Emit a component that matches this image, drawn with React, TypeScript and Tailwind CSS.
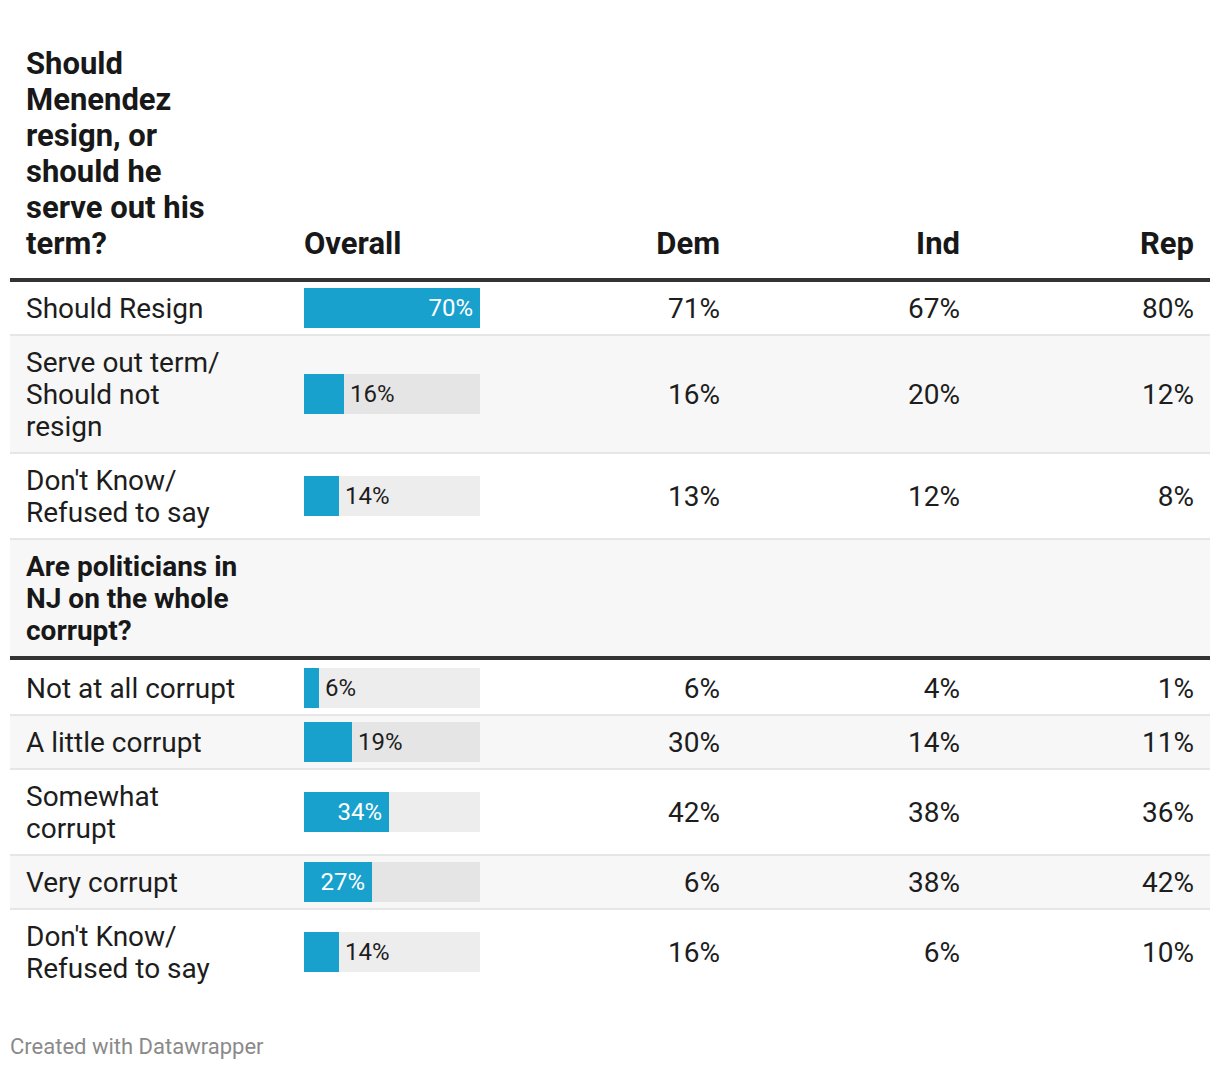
import React from "react";

type Row = {
  label: React.ReactNode;
  overall: number;
  dem: string;
  ind: string;
  rep: string;
  striped?: boolean;
  last?: boolean;
  first?: boolean;
};

const BLUE = "bg-[#18a1cd]";

function Bar({ v }: { v: number }) {
  const w = Math.round((v / 70) * 176);
  const inside = v >= 25;
  return (
    <div className="relative h-[40px] w-[176px] bg-[rgba(0,0,0,0.07)] flex items-center">
      <div className={`h-[40px] ${BLUE} shrink-0 flex items-center justify-end`} style={{ width: `${w}px` }}>
        {inside && <span className="text-white text-[24px] leading-none pr-[7px]">{v}%</span>}
      </div>
      {!inside && <span className="text-[#1d1d1d] text-[24px] leading-none pl-[6px]">{v}%</span>}
    </div>
  );
}

function DataRow({ r }: { r: Row }) {
  return (
    <div
      className={`grid grid-cols-[278px_208px_240px_240px_234px] items-center text-[28px] leading-[32px] text-[#1d1d1d] ${
        r.striped ? "bg-[#f7f7f7]" : "bg-white"
      } ${r.last ? "" : "border-b-2 border-[#e6e6e6]"} ${r.first ? "pt-[2px]" : ""}`}
    >
      <div className="px-[16px] pt-[11px] pb-[9px] whitespace-nowrap">{r.label}</div>
      <div className="px-[16px]">
        <Bar v={r.overall} />
      </div>
      <div className="px-[16px] pt-[2px] text-right">{r.dem}</div>
      <div className="px-[16px] pt-[2px] text-right">{r.ind}</div>
      <div className="px-[16px] pt-[2px] text-right">{r.rep}</div>
    </div>
  );
}

export default function App() {
  const rows1: Row[] = [
    { label: "Should Resign", overall: 70, dem: "71%", ind: "67%", rep: "80%" },
    {
      label: (
        <>
          Serve out term/
          <br />
          Should not
          <br />
          resign
        </>
      ),
      overall: 16,
      dem: "16%",
      ind: "20%",
      rep: "12%",
      striped: true,
    },
    {
      label: (
        <>
          Don't Know/
          <br />
          Refused to say
        </>
      ),
      overall: 14,
      dem: "13%",
      ind: "12%",
      rep: "8%",
    },
  ];
  const rows2: Row[] = [
    { label: "Not at all corrupt", overall: 6, dem: "6%", ind: "4%", rep: "1%", first: true },
    { label: "A little corrupt", overall: 19, dem: "30%", ind: "14%", rep: "11%", striped: true },
    {
      label: (
        <>
          Somewhat
          <br />
          corrupt
        </>
      ),
      overall: 34,
      dem: "42%",
      ind: "38%",
      rep: "36%",
    },
    { label: "Very corrupt", overall: 27, dem: "6%", ind: "38%", rep: "42%", striped: true },
    {
      label: (
        <>
          Don't Know/
          <br />
          Refused to say
        </>
      ),
      overall: 14,
      dem: "16%",
      ind: "6%",
      rep: "10%",
      last: true,
    },
  ];

  return (
    <div className="w-[1220px] h-[1070px] bg-white px-[10px] pt-[46px] font-[Roboto,sans-serif] overflow-hidden">
      {/* Header */}
      <div className="grid grid-cols-[278px_208px_240px_240px_234px] items-end pb-[16px] border-b-4 border-[#333333] text-[31px] leading-[36px] font-bold text-[#181818]">
        <div className="px-[16px] whitespace-nowrap">
          Should
          <br />
          Menendez
          <br />
          resign, or
          <br />
          should he
          <br />
          serve out his
          <br />
          term?
        </div>
        <div className="px-[16px]">Overall</div>
        <div className="px-[16px] text-right">Dem</div>
        <div className="px-[16px] text-right">Ind</div>
        <div className="px-[16px] text-right">Rep</div>
      </div>

      {rows1.map((r, i) => (
        <DataRow key={i} r={r} />
      ))}

      {/* Section header */}
      <div className="bg-[#f7f7f7] border-b-4 border-[#333333] px-[16px] pt-[11px] pb-[9px] text-[28px] leading-[32px] font-bold text-[#181818] whitespace-nowrap">
        Are politicians in
        <br />
        NJ on the whole
        <br />
        corrupt?
      </div>

      {rows2.map((r, i) => (
        <DataRow key={i} r={r} />
      ))}

      <div className="mt-[40px] text-[22px] leading-[26px] text-[#8a8a8a]">Created with Datawrapper</div>
    </div>
  );
}
